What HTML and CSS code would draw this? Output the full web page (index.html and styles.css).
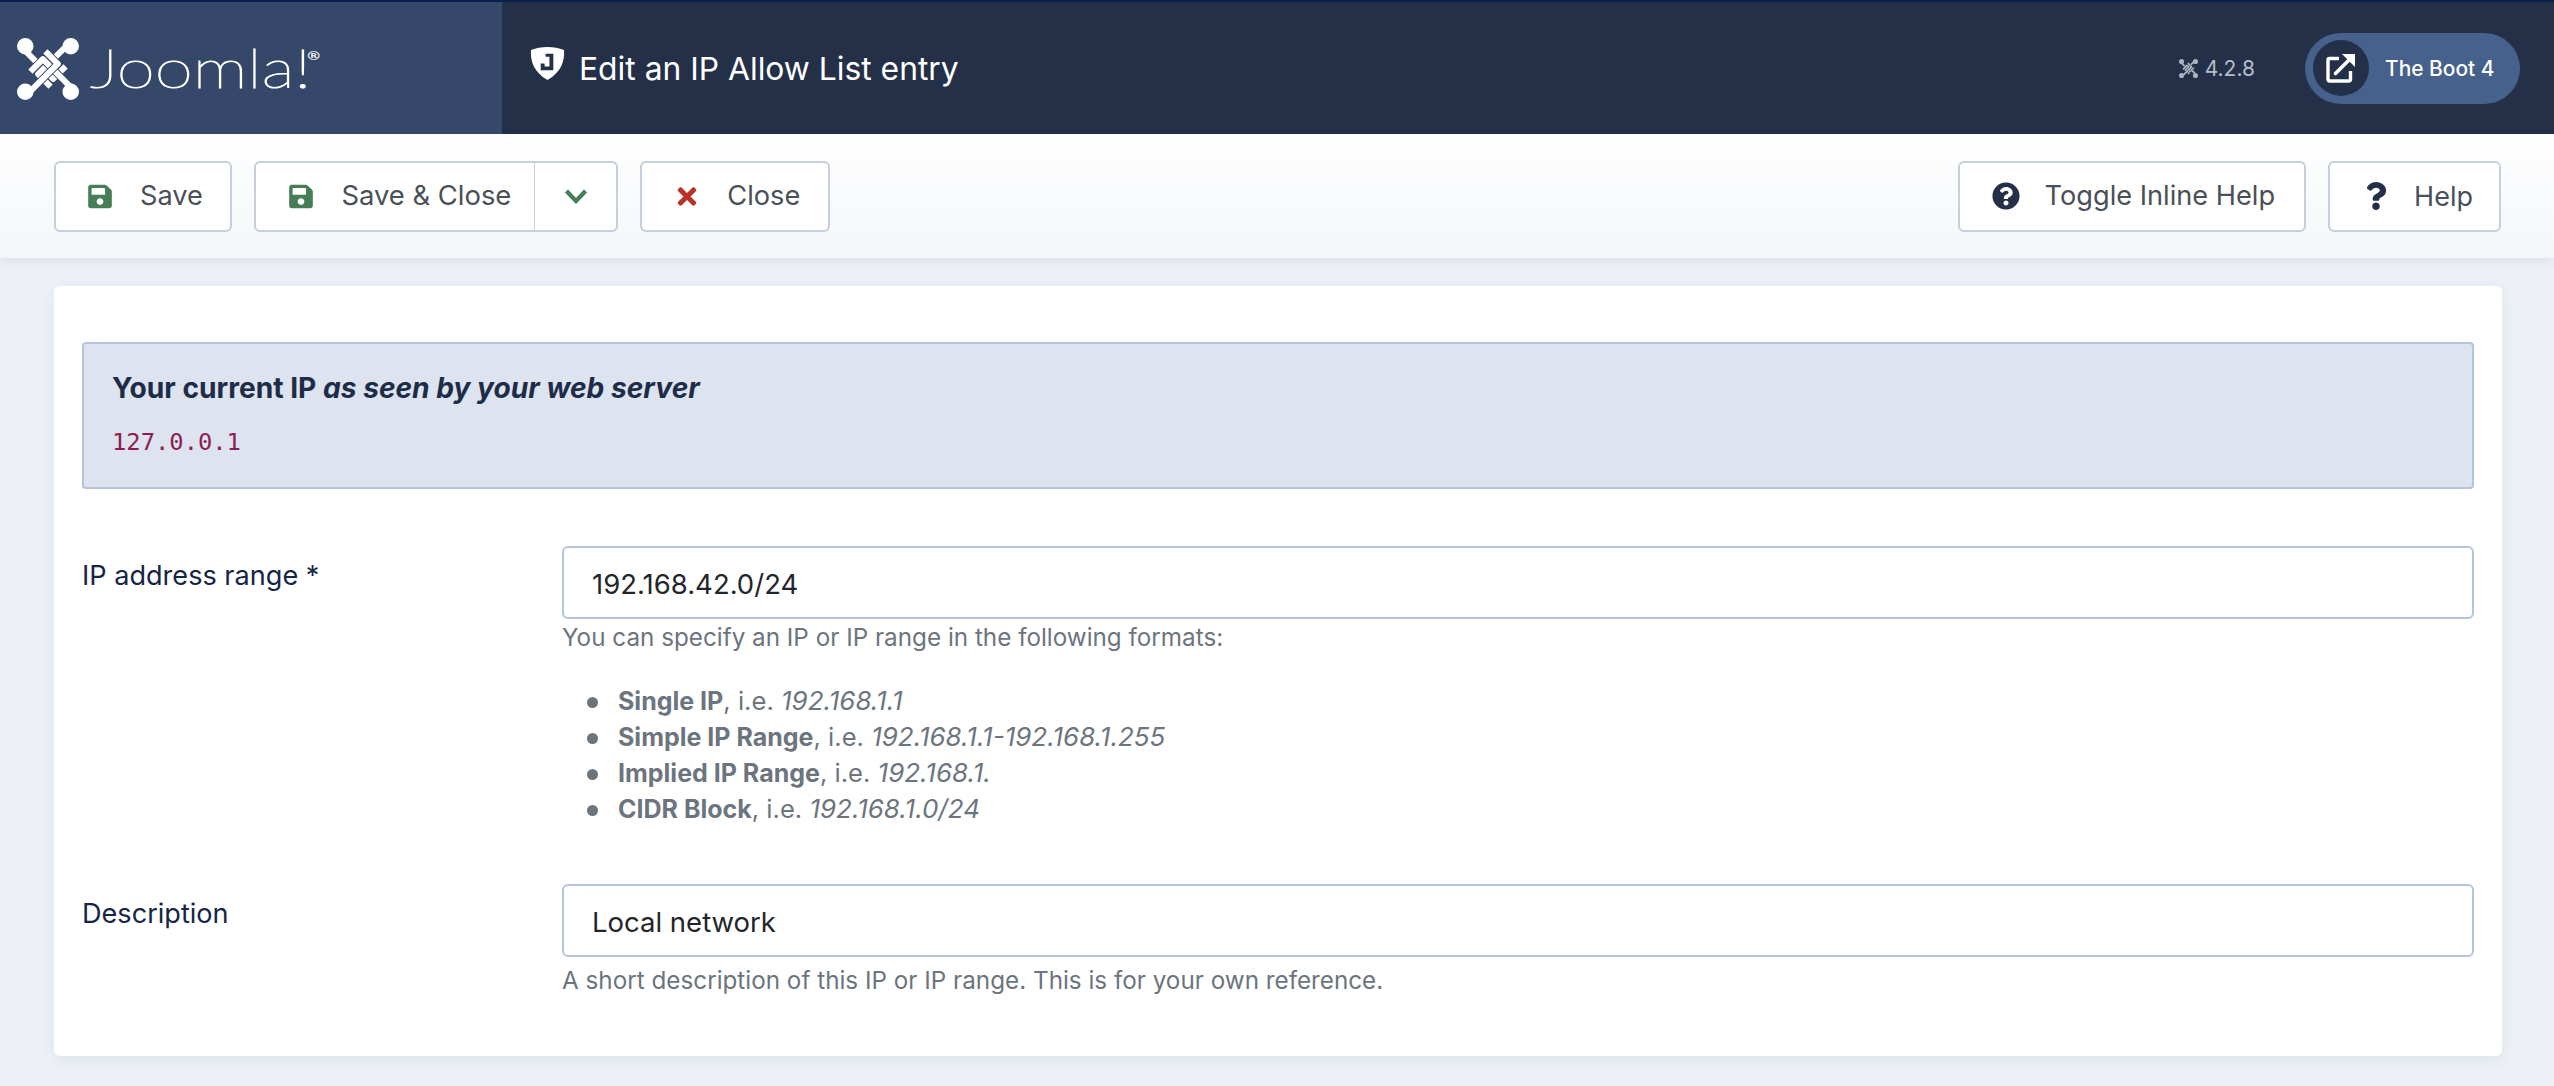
FILE: index.html
```html
<!DOCTYPE html>
<html lang="en">
<head>
<meta charset="utf-8">
<title>Edit an IP Allow List entry</title>
<link rel="stylesheet" href="styles.css">
</head>
<body>
<svg class="defs" width="0" height="0" aria-hidden="true">
  <symbol id="jknot" viewBox="0 0 60 60">
    <g fill="none" stroke-linejoin="round">
      <g class="knot-band"><path d="M8 8 9 13.500 35 39.500 47 27.500"/></g>
      <g class="knot-gap"><path d="M46.500 9 20.500 35 32.500 47"/></g>
      <g class="knot-band"><path d="M52 8 46.500 9 20.500 35 32.500 47"/></g>
      <g class="knot-gap"><path d="M51 46.500 25 20.500 13 32.500"/></g>
      <g class="knot-band"><path d="M52 52 51 46.500 25 20.500 13 32.500"/></g>
      <g class="knot-gap"><path d="M13.500 51 39.500 25 27.500 13"/></g>
      <g class="knot-band"><path d="M8 52 13.500 51 39.500 25 27.500 13"/></g>
    </g>
    <g fill="currentColor">
      <circle cx="8" cy="8" r="8"/><circle cx="52" cy="8" r="8"/><circle cx="8" cy="52" r="8"/><circle cx="52" cy="52" r="8"/>
    </g>
  </symbol>
  <symbol id="i-save" viewBox="0 0 448 512"><path d="M433.941 129.941l-83.882-83.882A48 48 0 0 0 316.118 32H48C21.49 32 0 53.49 0 80v352c0 26.51 21.49 48 48 48h352c26.51 0 48-21.49 48-48V163.882a48 48 0 0 0-14.059-33.941zM224 416c-35.346 0-64-28.654-64-64 0-35.346 28.654-64 64-64s64 28.654 64 64c0 35.346-28.654 64-64 64zm96-304.52V212c0 6.627-5.373 12-12 12H76c-6.627 0-12-5.373-12-12V108c0-6.627 5.373-12 12-12h228.52c3.183 0 6.235 1.264 8.485 3.515l3.48 3.48A11.996 11.996 0 0 1 320 111.48z"/></symbol>
</svg>

<header class="topbar">
  <a class="brand" href="#">
    <svg class="brand-knot"><use href="#jknot"/></svg>
    <span class="brand-word">Joomla!<sup class="brand-reg">®</sup></span>
  </a>
  <div class="page-title">
    <svg class="shield" viewBox="0 0 36 34"><path fill-rule="evenodd" d="M18 0C24 0 30 1 35 3 36 14 32 26 18 34 4 26 0 14 1 3 6 1 12 0 18 0ZM16 7V10H20V20H15V17H11V24H24V7Z"/></svg>
    <h1 class="page-heading">Edit an IP Allow List entry</h1>
  </div>
  <div class="top-right">
    <span class="version"><svg class="version-knot"><use href="#jknot"/></svg>4.2.8</span>
    <a class="site-pill" href="#">
      <span class="site-circle"><svg viewBox="0 0 30 30" class="site-icon"><path d="M13 5.500H3.500A1.500 1.500 0 0 0 2 7V26.500A1.500 1.500 0 0 0 3.500 28H23A1.500 1.500 0 0 0 24.500 26.500V18" fill="none" stroke="#fff" stroke-width="3.400"/><path d="M9.500 20.500 24 6" fill="none" stroke="#fff" stroke-width="3.600" stroke-linecap="round"/><path d="M16 1H29V14Z" fill="#fff"/></svg></span>
      <span class="site-name">The Boot 4</span>
    </a>
  </div>
</header>

<nav class="toolbar">
  <div class="tool-group">
    <button class="btn"><svg class="ico ico-green"><use href="#i-save"/></svg>Save</button>
    <div class="split">
      <button class="btn split-main"><svg class="ico ico-green"><use href="#i-save"/></svg>Save &amp; Close</button>
      <button class="btn split-toggle" aria-label="More"><svg class="chev" viewBox="0 0 24 16"><path d="M2.500 3 12 13 21.500 3" fill="none" stroke="#457d54" stroke-width="4.200"/></svg></button>
    </div>
    <button class="btn"><svg class="ico ico-red" viewBox="0 0 352 512"><path d="M242.72 256l100.07-100.07c12.28-12.28 12.28-32.19 0-44.48l-22.24-22.24c-12.28-12.28-32.19-12.28-44.48 0L176 189.28 75.93 89.21c-12.28-12.28-32.19-12.28-44.48 0L9.21 111.45c-12.28 12.28-12.28 32.19 0 44.48L109.28 256 9.21 356.07c-12.28 12.28-12.28 32.19 0 44.48l22.24 22.24c12.28 12.28 32.2 12.28 44.48 0L176 322.72l100.07 100.07c12.28 12.28 32.2 12.28 44.48 0l22.24-22.24c12.28-12.28 12.28-32.19 0-44.48L242.72 256z"/></svg>Close</button>
  </div>
  <div class="tool-group">
    <button class="btn btn-help"><svg class="ico ico-navy" viewBox="0 0 512 512"><path d="M504 256c0 136.997-111.043 248-248 248S8 392.997 8 256C8 119.083 119.043 8 256 8s248 111.083 248 248zM262.655 90c-54.497 0-89.255 22.957-116.549 63.758-3.536 5.286-2.353 12.415 2.715 16.258l34.699 26.31c5.205 3.947 12.621 3.008 16.665-2.122 17.864-22.658 30.113-35.797 57.303-35.797 20.429 0 45.698 13.148 45.698 32.958 0 14.976-12.363 22.667-32.534 33.976C247.128 238.528 216 254.941 216 296v4c0 6.627 5.373 12 12 12h56c6.627 0 12-5.373 12-12v-1.333c0-28.462 83.186-29.647 83.186-106.667 0-58.002-60.165-102-116.531-102zM256 338c-25.365 0-46 20.635-46 46 0 25.364 20.635 46 46 46s46-20.636 46-46c0-25.365-20.635-46-46-46z"/></svg>Toggle Inline Help</button>
    <button class="btn btn-help btn-help-short"><svg class="ico ico-navy" viewBox="0 0 384 512"><path d="M202.021 0C122.202 0 70.503 32.703 29.914 91.026c-7.363 10.58-5.093 25.086 5.178 32.874l43.138 32.709c10.373 7.865 25.132 6.026 33.253-4.148 25.049-31.381 43.63-49.449 82.757-49.449 30.764 0 68.816 19.799 68.816 49.631 0 22.552-18.617 34.134-48.993 51.164-35.423 19.86-82.299 44.576-82.299 106.405V320c0 13.255 10.745 24 24 24h72.471c13.255 0 24-10.745 24-24v-5.773c0-42.86 125.268-44.645 125.268-160.627C377.504 66.256 286.902 0 202.021 0zM192 373.459c-38.196 0-69.271 31.075-69.271 69.271 0 38.195 31.075 69.27 69.271 69.27s69.271-31.075 69.271-69.271-31.075-69.27-69.271-69.27z"/></svg>Help</button>
  </div>
</nav>

<main class="content">
  <section class="card">
    <div class="alert">
      <h2 class="alert-heading">Your current IP <em>as seen by your web server</em></h2>
      <code class="ip">127.0.0.1</code>
    </div>

    <div class="row">
      <label class="label" for="ip">IP address range *</label>
      <div class="field">
        <input class="input" id="ip" value="192.168.42.0/24">
        <div class="help">
          <p class="help-lead">You can specify an IP or IP range in the following formats:</p>
          <ul class="help-list">
            <li><strong>Single IP</strong>, i.e. <em>192.168.1.1</em></li>
            <li><strong>Simple IP Range</strong>, i.e. <em>192.168.1.1-192.168.1.255</em></li>
            <li><strong>Implied IP Range</strong>, i.e. <em>192.168.1.</em></li>
            <li><strong>CIDR Block</strong>, i.e. <em>192.168.1.0/24</em></li>
          </ul>
        </div>
      </div>
    </div>

    <div class="row">
      <label class="label" for="desc">Description</label>
      <div class="field">
        <input class="input" id="desc" value="Local network">
        <div class="help help-single"><p class="help-lead">A short description of this IP or IP range. This is for your own reference.</p></div>
      </div>
    </div>
  </section>
</main>
</body>
</html>
```
FILE: styles.css
```css
* { box-sizing: border-box; }
html, body { margin: 0; height: 100%; }
body {
  background: #edf1f7;
  color: #22262a;
  font-family: Inter, "Noto Sans", sans-serif;
  overflow: hidden;
}
.defs { position: absolute; }
.knot-gap { stroke: var(--knot-bg, #364869); stroke-width: 7.500; }
.knot-band { stroke: currentColor; stroke-width: 5.800; }

.topbar {
  display: flex;
  align-items: stretch;
  height: 134px;
  background: #242f48;
  border-top: 2px solid #0b1f52;
}
.brand {
  display: flex;
  align-items: center;
  gap: 11px;
  width: 502px;
  padding: 0 0 0 17px;
  background: #364869;
  color: #fff;
  text-decoration: none;
}
.brand-knot { width: 62px; height: 62px; margin-top: 2px; color: #fff; }
.brand-word {
  font-family: Lato, sans-serif;
  font-weight: 100;
  font-size: 54px;
  line-height: 1;
  -webkit-text-stroke: 1.100px #fff;
  transform: scaleX(1.280);
  transform-origin: left center;
}
.brand-reg { margin-left: -3px; font-size: 12px; font-weight: 400; vertical-align: 28px; line-height: 0; -webkit-text-stroke: .2px #fff; }

.page-title {
  display: flex;
  align-items: center;
  flex: 1;
  padding-left: 28px;
  color: #fff;
}
.shield { width: 35px; height: 33px; fill: #fff; margin-top: -9px; margin-right: 14px; }
.page-heading { margin: 0; padding-top: 2px; font-size: 31.800px; font-weight: 400; line-height: 1.2; }

.top-right { display: flex; align-items: center; padding-right: 34px; }
.version { display: flex; align-items: center; gap: 7px; margin-right: 50px; color: #b3bdc9; font-size: 21px; }
.version-knot { --knot-bg: #242f48; width: 19px; height: 19px; color: #a9b4c1; }
.site-pill {
  display: flex;
  align-items: center;
  gap: 16px;
  height: 71px;
  width: 215px;
  padding-left: 8px;
  border-radius: 36px;
  background: #46618c;
  color: #fff;
  font-size: 20.900px;
  font-weight: 500;
  text-decoration: none;
}
.site-circle {
  display: flex;
  align-items: center;
  justify-content: center;
  width: 56px;
  height: 56px;
  border-radius: 50%;
  background: #242f48;
}
.site-icon { width: 30px; height: 30px; }

.toolbar {
  display: flex;
  justify-content: space-between;
  align-items: center;
  height: 124px;
  padding: 0 53px 0 54px;
  background: linear-gradient(#fff, #f4f6fa);
  box-shadow: 0 4px 12px rgba(36, 47, 72, .08);
}
.tool-group { display: flex; gap: 22px; }
.btn {
  display: flex;
  align-items: center;
  height: 71px;
  padding: 0 27.500px 0 32px;
  background: #fff;
  border: 2px solid #c6cfdd;
  border-radius: 6px;
  color: #495057;
  font-family: inherit;
  font-size: 27.200px;
  line-height: 1;
}
.ico { width: 24px; height: 27px; margin-right: 28px; }
.ico-green { fill: #457d54; }
.ico-red { fill: #b8322a; width: 20px; margin-left: 3px; margin-right: 30px; }
.ico-navy { fill: #242f48; }
.btn-help { padding-right: 29px; }
.btn-help .ico { width: 28px; height: 28px; margin-right: 25px; }
.btn-help-short { padding-right: 26px; font-size: 27px; }
.btn-help-short .ico { margin-right: 24px; }
.split { display: flex; }
.split-main { border-radius: 6px 0 0 6px; border-right-width: 1px; padding: 0 23px 0 33px; font-size: 27.400px; }
.split-toggle { width: 83px; justify-content: center; padding: 0; border-left: 0; border-radius: 0 6px 6px 0; }
.chev { width: 24px; height: 16px; }

.content { padding: 28px 52px 0 54px; }
.card {
  height: 770px;
  padding: 56px 28px 0;
  background: #fff;
  border-radius: 6px;
  box-shadow: 0 4px 16px rgba(36, 47, 72, .07);
}
.alert {
  height: 147px;
  padding: 26px 28px 0;
  background: #dde3ef;
  border: 2px solid #b5c4dc;
  border-radius: 4px;
}
.alert-heading { margin: 0 0 20px; color: #1d2c48; font-size: 28.150px; font-weight: 700; line-height: 36px; }
.ip { display: block; color: #8f1c50; font-family: "DejaVu Sans Mono", "Liberation Mono", monospace; font-size: 23.800px; line-height: 32px; }

.row { display: grid; grid-template-columns: 480px 1fr; margin-top: 57px; }
.label { padding-top: 12px; color: #152546; font-size: 27.100px; line-height: 36px; }
.input {
  display: block;
  width: 100%;
  height: 73px;
  padding: 3px 28px 0;
  background: #fff;
  border: 2px solid #b5c4dc;
  border-radius: 6px;
  color: #22262a;
  font-family: inherit;
  font-size: 27.500px;
}
.help { padding-top: 1px; color: #6c757d; font-size: 24.250px; line-height: 36px; }
.help-single { padding-top: 6px; }
.help-lead { margin: 0; }
.help-list { margin: 27px 0 0; padding: 0 0 0 56px; font-size: 25.600px; list-style: none; }
.help-list li::before {
  content: "";
  display: inline-block;
  width: 11px;
  height: 11px;
  margin: 0 20px 2px -31px;
  border-radius: 50%;
  background: #6c757d;
}
.help-list strong { font-size: 25px; }
.help-list em { font-size: 26px; }
```
